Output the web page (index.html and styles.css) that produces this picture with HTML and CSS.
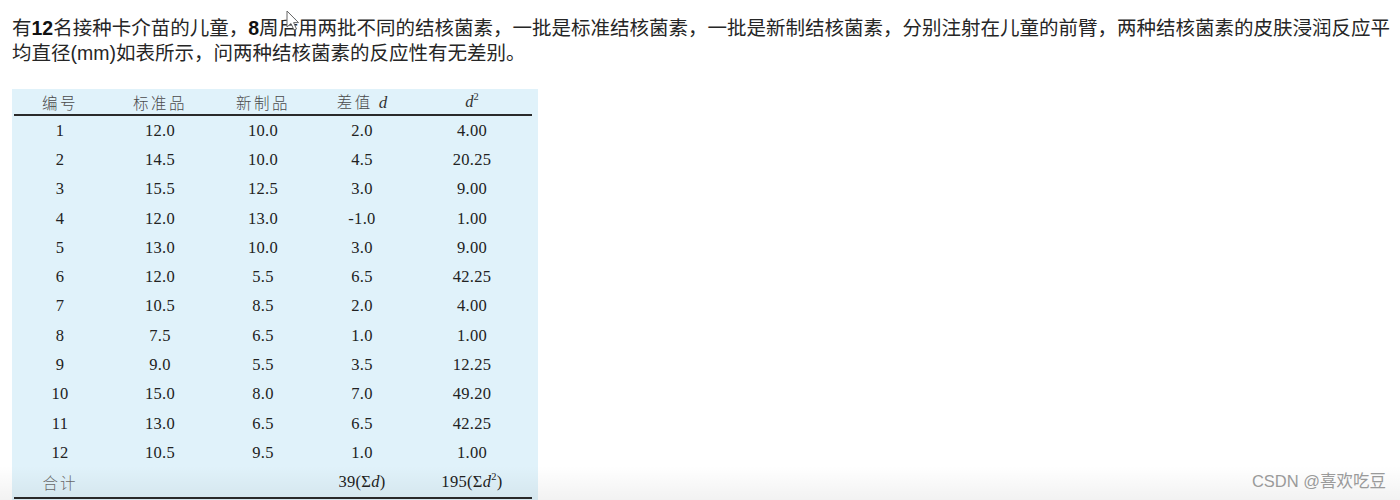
FILE: index.html
```html
<!DOCTYPE html>
<html lang="zh-CN">
<head>
<meta charset="utf-8">
<title>配对t检验示例</title>
<link rel="stylesheet" href="styles.css">
</head>
<body>
<p class="intro">有<b class="num">12</b>名接种卡介苗的儿童，<b class="num">8</b>周后用两批不同的结核菌素，一批是标准结核菌素，一批是新制结核菌素，分别注射在儿童的前臂，两种结核菌素的皮肤浸润反应平均直径<span class="lat">(mm)</span>如表所示，问两种结核菌素的反应性有无差别。</p>

<div class="sheet">
  <div class="row head">
    <span class="zh">编号</span>
    <span class="zh">标准品</span>
    <span class="zh">新制品</span>
    <span class="zh">差值 <i>d</i></span>
    <span><i>d</i><sup>2</sup></span>
  </div>
  <div class="row"><span>1</span><span>12.0</span><span>10.0</span><span>2.0</span><span>4.00</span></div>
  <div class="row"><span>2</span><span>14.5</span><span>10.0</span><span>4.5</span><span>20.25</span></div>
  <div class="row"><span>3</span><span>15.5</span><span>12.5</span><span>3.0</span><span>9.00</span></div>
  <div class="row"><span>4</span><span>12.0</span><span>13.0</span><span>-1.0</span><span>1.00</span></div>
  <div class="row"><span>5</span><span>13.0</span><span>10.0</span><span>3.0</span><span>9.00</span></div>
  <div class="row"><span>6</span><span>12.0</span><span>5.5</span><span>6.5</span><span>42.25</span></div>
  <div class="row"><span>7</span><span>10.5</span><span>8.5</span><span>2.0</span><span>4.00</span></div>
  <div class="row"><span>8</span><span>7.5</span><span>6.5</span><span>1.0</span><span>1.00</span></div>
  <div class="row"><span>9</span><span>9.0</span><span>5.5</span><span>3.5</span><span>12.25</span></div>
  <div class="row"><span>10</span><span>15.0</span><span>8.0</span><span>7.0</span><span>49.20</span></div>
  <div class="row"><span>11</span><span>13.0</span><span>6.5</span><span>6.5</span><span>42.25</span></div>
  <div class="row"><span>12</span><span>10.5</span><span>9.5</span><span>1.0</span><span>1.00</span></div>
  <div class="row total">
    <span class="zh">合计</span>
    <span></span>
    <span></span>
    <span>39(Σ<i>d</i>)</span>
    <span>195(Σ<i>d</i><sup>2</sup>)</span>
  </div>
</div>

<div class="shade"></div>
<div class="mark">CSDN @喜欢吃豆</div>
<svg class="cursor" width="14" height="22" viewBox="0 0 14 22"><path d="M1 1 L1 17 L5 13.5 L8 20 L10.5 19 L7.6 12.6 L12.5 12.6 Z" fill="#fff" stroke="#666" stroke-width="1" stroke-linejoin="round"/></svg>
</body>
</html>
```

FILE: styles.css
```css
html, body {
  margin: 0;
  padding: 0;
  background: #fff;
  overflow: hidden;
}

body {
  width: 1400px;
  height: 500px;
  padding-left: 12px;
  box-sizing: border-box;
  font-family: "Liberation Sans", "Noto Sans CJK SC", sans-serif;
  color: #1c1c1c;
}

.intro {
  margin: 16px 0 0 0;
  font-size: 19.5px;
  line-height: 25px;
  width: 1388px;
  font-family: "Liberation Sans", "Noto Sans CJK SC", sans-serif;
  font-weight: 400;
  color: #262626;
}

.intro .num {
  font-weight: 700;
  color: #111;
}

.sheet {
  margin-top: 23px;
  width: 518px;
  padding: 0 6px 20px 2px;
  background: #e0f2fa;
  font-family: "Liberation Serif", "Noto Sans CJK SC", serif;
  font-size: 16.5px;
  letter-spacing: 0.3px;
  color: #222;
}

.row {
  display: grid;
  grid-template-columns: 92px 108px 98px 100px 120px;
  height: 29.3px;
  align-items: center;
  justify-items: center;
}

.row.head {
  height: 25px;
  border-bottom: 2px solid #2a2a2a;
  color: #555;
}

.row.total {
  border-bottom: 2px solid #2a2a2a;
  height: 29.3px;
}

.zh {
  font-family: "Noto Sans CJK SC", sans-serif;
  font-weight: 300;
  font-size: 15.5px;
  letter-spacing: 2.5px;
  color: #4a4a4a;
}

.row.head i, .row.head sup {
  font-family: "Liberation Serif", serif;
  letter-spacing: 0;
  color: #333;
}

.row.head .zh i {
  font-size: 17px;
}

.row.total .zh {
  color: #6a6a6a;
  letter-spacing: 2px;
}

sup {
  font-size: 10.5px;
  line-height: 0;
  vertical-align: 7px;
}

i {
  font-style: italic;
}

.shade {
  position: absolute;
  left: 0;
  bottom: 0;
  width: 1400px;
  height: 34px;
  background: linear-gradient(to bottom, rgba(0,0,0,0), rgba(0,0,0,0.05));
  pointer-events: none;
}

.mark {
  position: absolute;
  right: 14px;
  bottom: 8px;
  font-family: "Liberation Sans", "Noto Sans CJK SC", sans-serif;
  font-size: 16.5px;
  color: #9a9a9a;
}

.cursor {
  position: absolute;
  left: 286px;
  top: 10px;
}
```
